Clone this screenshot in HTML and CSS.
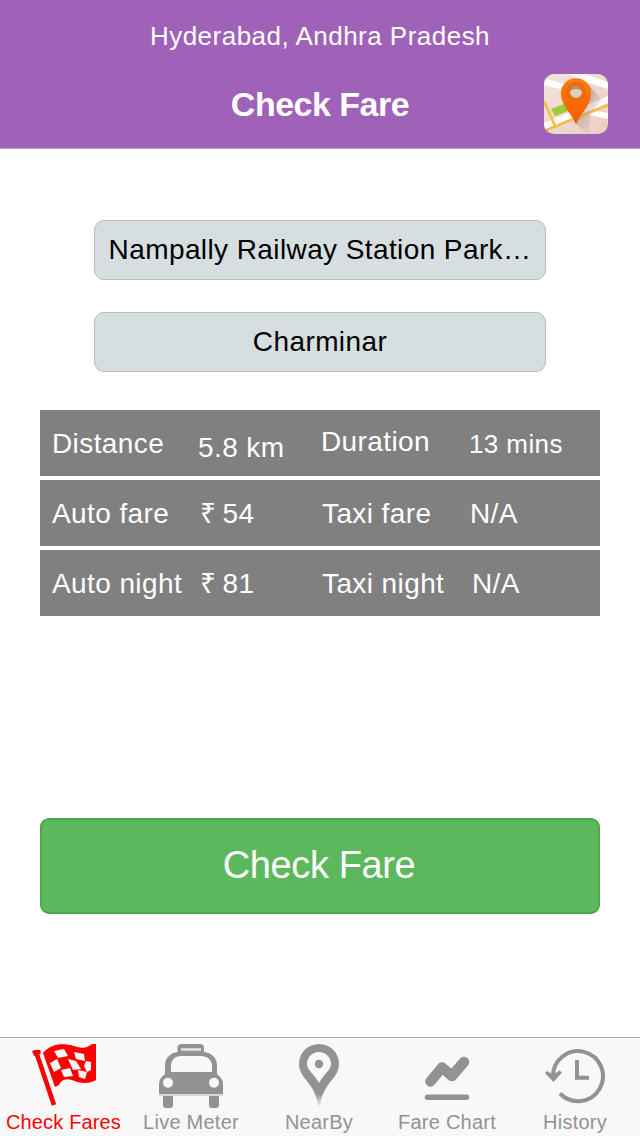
FILE: index.html
```html
<!DOCTYPE html>
<html lang="en">
<head>
  <meta charset="UTF-8" />
  <meta name="viewport" content="width=device-width, initial-scale=1.0"/>
  <title>Check Fare</title>
  <link rel="stylesheet" href="styles.css">
</head>
<body>
  <header class="header">
    <p class="city">Hyderabad, Andhra Pradesh</p>
    <div class="nav">
      <h1>Check Fare</h1>
      <a class="map-button" href="#" aria-label="Map">
        <svg width="64" height="60" viewBox="0 0 64 60">
          <defs>
            <linearGradient id="land" x1="0" y1="0" x2="1" y2="1">
              <stop offset="0" stop-color="#f2e3dc"/>
              <stop offset="1" stop-color="#eacfc2"/>
            </linearGradient>
            <linearGradient id="shadow" x1="0" y1="0" x2="1" y2="1">
              <stop offset="0.2" stop-color="#8d6f62" stop-opacity="0.6"/>
              <stop offset="0.9" stop-color="#c9a898" stop-opacity="0"/>
            </linearGradient>
            <linearGradient id="pin" x1="0" y1="0" x2="0" y2="1">
              <stop offset="0" stop-color="#fb7d0c"/>
              <stop offset="1" stop-color="#f85a00"/>
            </linearGradient>
          </defs>
          <rect width="64" height="60" fill="url(#land)"/>
          <path d="M0 4l20 6v6L0 11zM24 0h17l23 8v7L42 8zM0 49l64-27v7L0 56zM42 40l5-4 17 3v6z" fill="#fff"/>
          <path d="M0 57l64-26M0 27l11 25" fill="none" stroke="#f8bd43" stroke-width="2.6"/>
          <path d="M7 35l13-5 4 7-13 5z" fill="#9bcb35"/>
          <path d="M43 9l15 17-11 13-2 21-13-10z" fill="url(#shadow)"/>
          <path d="M32 50.500C28 40 16.800 31 16.800 19.500a15.200 15.200 0 0 1 30.400 0C47.200 31 36 40 32 50.500z" fill="url(#pin)"/>
          <circle cx="32" cy="18" r="8" fill="none" stroke="#ee6b0a" stroke-width="4"/>
          <circle cx="32" cy="18" r="6" fill="#e6cabb"/>
          <path d="M26 18a6 6 0 0 1 12 0c-2-4-10-4-12 0z" fill="#b98a70"/>
        </svg>
      </a>
    </div>
  </header>

  <main>
    <div class="places">
      <button class="place" type="button">Nampally Railway Station Park…</button>
      <button class="place" type="button">Charminar</button>
    </div>

    <div class="fares">
      <div class="fare-row trip">
        <span class="label">Distance</span>
        <span class="value distance">5.8 km</span>
        <span class="label duration">Duration</span>
        <span class="value minutes">13 mins</span>
      </div>
      <div class="fare-row">
        <span class="label">Auto fare</span>
        <span class="value rupees">₹ 54</span>
        <span class="label">Taxi fare</span>
        <span class="value">N/A</span>
      </div>
      <div class="fare-row night">
        <span class="label">Auto night</span>
        <span class="value rupees">₹ 81</span>
        <span class="label">Taxi night</span>
        <span class="value">N/A</span>
      </div>
    </div>

    <button class="check-button" type="button">Check Fare</button>
  </main>

  <nav class="tabs">
    <a class="tab active" href="#">
      <svg width="64" height="64" viewBox="0 0 64 64">
        <path d="M4.500 9L22 61" stroke="currentColor" stroke-width="4.600"/>
        <path d="M0 7l3-1h5.500v4L2 12z" fill="currentColor"/>
        <path d="M11 9C19-1 32-1 42 2c9 3 13 2 18-2h4v36c-6 4-16 4-24 0-7-2-11 0-13 5l-4 2z" fill="currentColor"/>
        <path d="M22 7l10-2 4 7-10 2zM42 8l10 2 1 7-9-2zM18 19l7-4 4 9-7 4zM29 26l9-2 3 8-9 1zM36 15l8 2 5 8-8 1zM54 17l5 1v8l-4 2-3-6zM46 26l9 2-2 7-6-2z" fill="#f8f8f8"/>
      </svg>
      <span>Check Fares</span>
    </a>
    <a class="tab" href="#">
      <svg width="64" height="64" viewBox="0 0 64 64" fill="currentColor">
        <path d="M18.500 10V4q0-4 4-4h18.500q4 0 4 4v6z"/>
        <path d="M22 4.200h20v2.500H22z" fill="#e4e4e4"/>
        <path d="M6 30V21C6 14 12 8 20 8h24c8 0 14 6 14 13v9c4 3 6 6 6 11v9H0v-9c0-5 2-8 6-11z"/>
        <path d="M12 28v-6c0-6 4-10 10-10h20c6 0 11 4 11 10v6z" fill="#f8f8f8"/>
        <circle cx="9" cy="38.700" r="5" fill="#f8f8f8"/>
        <circle cx="55" cy="38.700" r="5" fill="#f8f8f8"/>
        <path d="M0 50h64v2H0z" opacity="0.3"/>
        <path d="M4 52h10v9q0 3-3 3H7q-3 0-3-3zM50 52h10v9q0 3-3 3h-4q-3 0-3-3z"/>
      </svg>
      <span>Live Meter</span>
    </a>
    <a class="tab" href="#">
      <svg width="64" height="64" viewBox="0 0 64 64" fill="currentColor">
        <defs>
          <linearGradient id="fade" x1="0" y1="0" x2="0" y2="1">
            <stop offset="0.800" stop-color="#929292"/>
            <stop offset="1" stop-color="#929292" stop-opacity="0.100"/>
          </linearGradient>
        </defs>
        <path fill="url(#fade)" fill-rule="evenodd" d="M32 0a20 20 0 0 1 20 20c0 9-6 14-11 21-4 6-7 12-8 21h-2c-1-9-4-15-8-21-5-7-11-12-11-21A20 20 0 0 1 32 0zM32 8a12 12 0 0 0-12 12c0 6 8 11 12 19 4-8 12-13 12-19A12 12 0 0 0 32 8z"/>
        <circle cx="32" cy="20" r="4.200"/>
      </svg>
      <span>NearBy</span>
    </a>
    <a class="tab" href="#">
      <svg width="64" height="64" viewBox="0 0 64 64" fill="none" stroke="currentColor">
        <path d="M15.500 37.500L27 23.500l10 8.500 12-14" stroke-width="10.500" stroke-linecap="round" stroke-linejoin="round"/>
        <path d="M12.500 53.200h39" stroke-width="5.500" stroke-linecap="round"/>
      </svg>
      <span>Fare Chart</span>
    </a>
    <a class="tab" href="#">
      <svg width="64" height="64" viewBox="0 0 64 64" fill="none" stroke="currentColor" stroke-width="4">
        <path d="M10 33A25 25 0 1 1 17 49.500"/>
        <path d="M34 16v17.700h12"/>
        <path d="M2 29l2-2 6 3.500 6.500-4 2.500 2-8.500 9.500z" fill="currentColor" stroke="none"/>
      </svg>
      <span>History</span>
    </a>
  </nav>
</body>
</html>
```
FILE: styles.css
```css
* { box-sizing: border-box; }
body {
  display: flex;
  flex-direction: column;
  width: 640px;
  height: 1136px;
  margin: 0;
  background-color: #ffffff;
  font-family: "Liberation Sans", Arial, sans-serif;
}
button { font-family: inherit; }

.header {
  height: 149px;
  background-color: #a061b8;
  border-bottom: 1px solid #b2a9b6;
  color: #ffffff;
}
.city {
  margin: 0;
  padding-top: 16px;
  font-size: 26px;
  line-height: 40px;
  letter-spacing: 0.48px;
  text-align: center;
}
.nav {
  display: grid;
  grid-template-columns: 96px 1fr 96px;
  align-items: center;
  height: 64px;
  margin-top: 16px;
}
.nav h1 {
  grid-column: 2;
  margin: 0;
  font-size: 34px;
  letter-spacing: -0.5px;
  text-align: center;
}
.map-button {
  height: 60px;
  border-radius: 10px;
  overflow: hidden;
  width: 64px;
}
.map-button svg { display: block; }

main {
  flex: 1;
  padding: 71px 40px 0;
}
.places {
  display: flex;
  flex-direction: column;
  gap: 32px;
  padding: 0 54px;
}
.place {
  height: 60px;
  padding: 0;
  background-color: #d6dedf;
  border: 1px solid #b5bebe;
  border-radius: 10px;
  color: #000000;
  font-size: 28px;
  letter-spacing: 0.4px;
  white-space: nowrap;
}

.fares {
  display: grid;
  gap: 4px;
  margin-top: 38px;
}
.fare-row {
  display: grid;
  grid-template-columns: 148px 122px 148px 1fr;
  height: 66px;
  padding-left: 12px;
  background-color: #808080;
  color: #ffffff;
  font-size: 28px;
  line-height: 68px;
  letter-spacing: 0.4px;
  white-space: nowrap;
}
.trip {
  grid-template-columns: 146px 123px 148px 1fr;
  padding-left: 12px;
}
.night { grid-template-columns: 148px 122px 150px 1fr; }
.rupees { word-spacing: -2px; }
.distance { padding-top: 4px; }
.duration { margin-top: -2px; }
.minutes { font-size: 26px; }

.check-button {
  width: 100%;
  height: 96px;
  margin-top: 202px;
  padding: 0 2px 2px 0;
  background-color: #5cb85c;
  border: 2px solid #4ca64c;
  border-radius: 9px;
  color: #ffffff;
  font-size: 38px;
  letter-spacing: -0.4px;
}

.tabs {
  display: grid;
  grid-template-columns: 127px repeat(4, 128px);
  height: 99px;
  background-color: #f8f8f8;
  border-top: 1px solid #acacac;
}
.tab {
  display: flex;
  flex-direction: column;
  align-items: center;
  padding-top: 6px;
  color: #929292;
  font-size: 20px;
  line-height: 28px;
  letter-spacing: 0.25px;
  text-decoration: none;
  white-space: nowrap;
}
.tab.active {
  color: #ff0000;
  letter-spacing: 0.15px;
}
.tab svg { flex: none; }
```
